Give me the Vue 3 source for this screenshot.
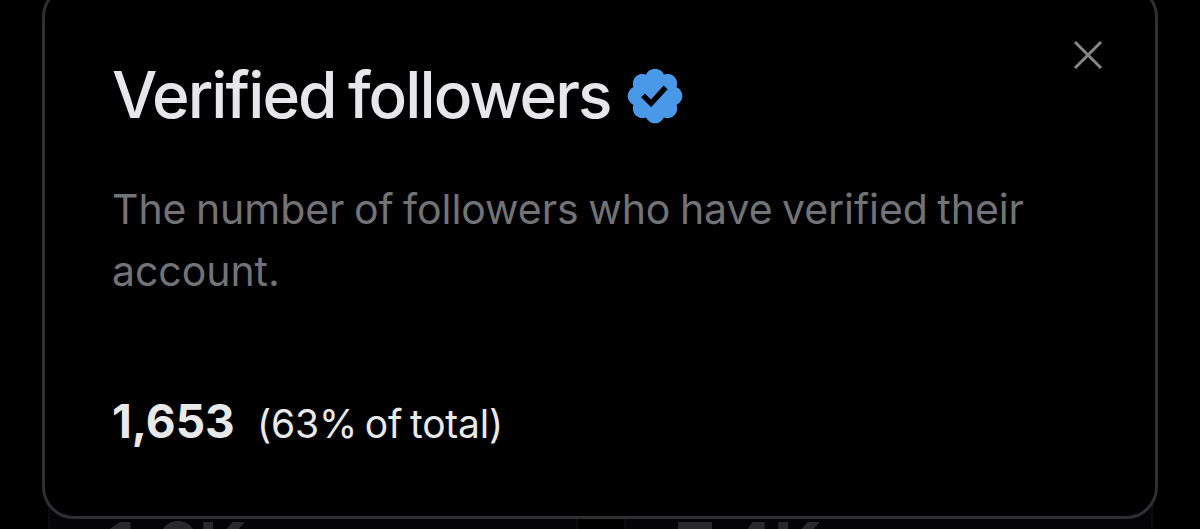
<template>
    <div class="page">
        <div class="stats">
            <div v-for="stat in stats" :key="stat" class="stat-card">{{ stat }}</div>
        </div>

        <div class="modal">
            <button class="close-btn" aria-label="Close">
                <svg viewBox="0 0 30 30">
                    <path d="M2 2L28 28M28 2L2 28" />
                </svg>
            </button>

            <h2 class="title">
                <span class="title-text">Verified followers</span>
                <svg class="badge" viewBox="0 0 22 22">
                    <path d="M20.396 11c-.018-.646-.215-1.275-.57-1.816-.354-.54-.852-.972-1.438-1.246.223-.607.27-1.264.14-1.897-.131-.634-.437-1.218-.882-1.687-.47-.445-1.053-.75-1.687-.882-.633-.13-1.29-.083-1.897.14-.273-.587-.704-1.086-1.245-1.44S11.647 1.62 11 1.604c-.646.017-1.273.213-1.813.568s-.969.854-1.24 1.44c-.608-.223-1.267-.272-1.902-.14-.635.13-1.22.436-1.69.882-.445.47-.749 1.055-.878 1.688-.13.633-.08 1.29.144 1.896-.587.274-1.087.705-1.443 1.245-.356.54-.555 1.17-.574 1.817.02.647.218 1.276.574 1.817.356.54.856.972 1.443 1.245-.224.606-.274 1.263-.144 1.896.13.634.433 1.218.877 1.688.47.443 1.054.747 1.687.878.633.132 1.29.084 1.897-.136.274.586.705 1.084 1.246 1.439.54.354 1.17.551 1.816.569.647-.016 1.276-.213 1.817-.567s.972-.854 1.245-1.44c.604.239 1.266.296 1.903.164.636-.132 1.22-.447 1.68-.907.46-.46.776-1.044.908-1.681s.075-1.299-.165-1.903c.586-.274 1.084-.705 1.439-1.246.354-.54.551-1.17.569-1.816zM9.662 14.85l-3.429-3.428 1.293-1.302 2.072 2.072 4.4-4.794 1.347 1.246z" />
                </svg>
            </h2>

            <p class="description">The number of followers who have verified their account.</p>

            <div class="result">
                <span class="count">{{ count.toLocaleString('en-US') }}</span>
                <span class="share">({{ percent }}% of total)</span>
            </div>
        </div>
    </div>
</template>

<script setup>
import { ref } from 'vue'

const count = ref(1653)
const percent = ref(63)

// Cards behind the modal
const stats = ['1.6K', '7.4K']
</script>

<style>
body {
    background: #000;
}
</style>

<style scoped>
.page {
    position: relative;
    height: 529px;
    overflow: hidden;
    background: #000;
    font-family: Inter, "Liberation Sans", sans-serif;
}

.stats {
    position: absolute;
    top: 440px;
    left: 48px;
    width: 1105px;
    display: grid;
    grid-template-columns: 1fr 1fr;
    gap: 46px;
}

.stat-card {
    box-sizing: border-box;
    height: 160px;
    padding: 66px 0 0 50px;
    border: 2px solid #0c0c0f;
    border-radius: 24px;
    background: #040406;
    color: #29292b;
    font-size: 67px;
    line-height: 78px;
    font-weight: 700;
}

.stat-card:first-child {
    padding-left: 56px;
}

.modal {
    position: absolute;
    top: -15px;
    left: 42px;
    box-sizing: border-box;
    width: 1116px;
    height: 534px;
    padding: 68px 67px 0;
    border: 3px solid #2f2f31;
    border-radius: 32px;
    background: #000;
}

.close-btn {
    position: absolute;
    top: 52px;
    right: 52px;
    width: 30px;
    height: 30px;
    padding: 0;
    border: none;
    background: none;
    cursor: pointer;
}

.close-btn svg {
    display: block;
    width: 30px;
    height: 30px;
    fill: none;
    stroke: #878787;
    stroke-width: 3;
}

.title {
    display: flex;
    align-items: center;
    height: 80px;
    margin: 0;
    color: #e7e7e9;
    font-size: 64px;
    line-height: 80px;
    font-weight: 500;
}

.title-text {
    width: 511px;
    margin-top: -3px;
    letter-spacing: -1.9px;
    word-spacing: -3px;
    white-space: nowrap;
}

.badge {
    flex: none;
    width: 64px;
    height: 64px;
    fill: #4a99e9;
}

.description {
    width: 940px;
    margin: 42px 0 0;
    color: #717377;
    font-size: 41px;
    line-height: 62px;
    font-weight: 400;
    letter-spacing: -0.05px;
    word-spacing: -2px;
}

.result {
    display: flex;
    align-items: baseline;
    margin-top: 88px;
    color: #e7e9ea;
    line-height: 62px;
}

.count {
    width: 145px;
    font-size: 46px;
    font-weight: 700;
}

.share {
    font-size: 39px;
    letter-spacing: -0.2px;
    word-spacing: -3px;
    white-space: nowrap;
}
</style>
